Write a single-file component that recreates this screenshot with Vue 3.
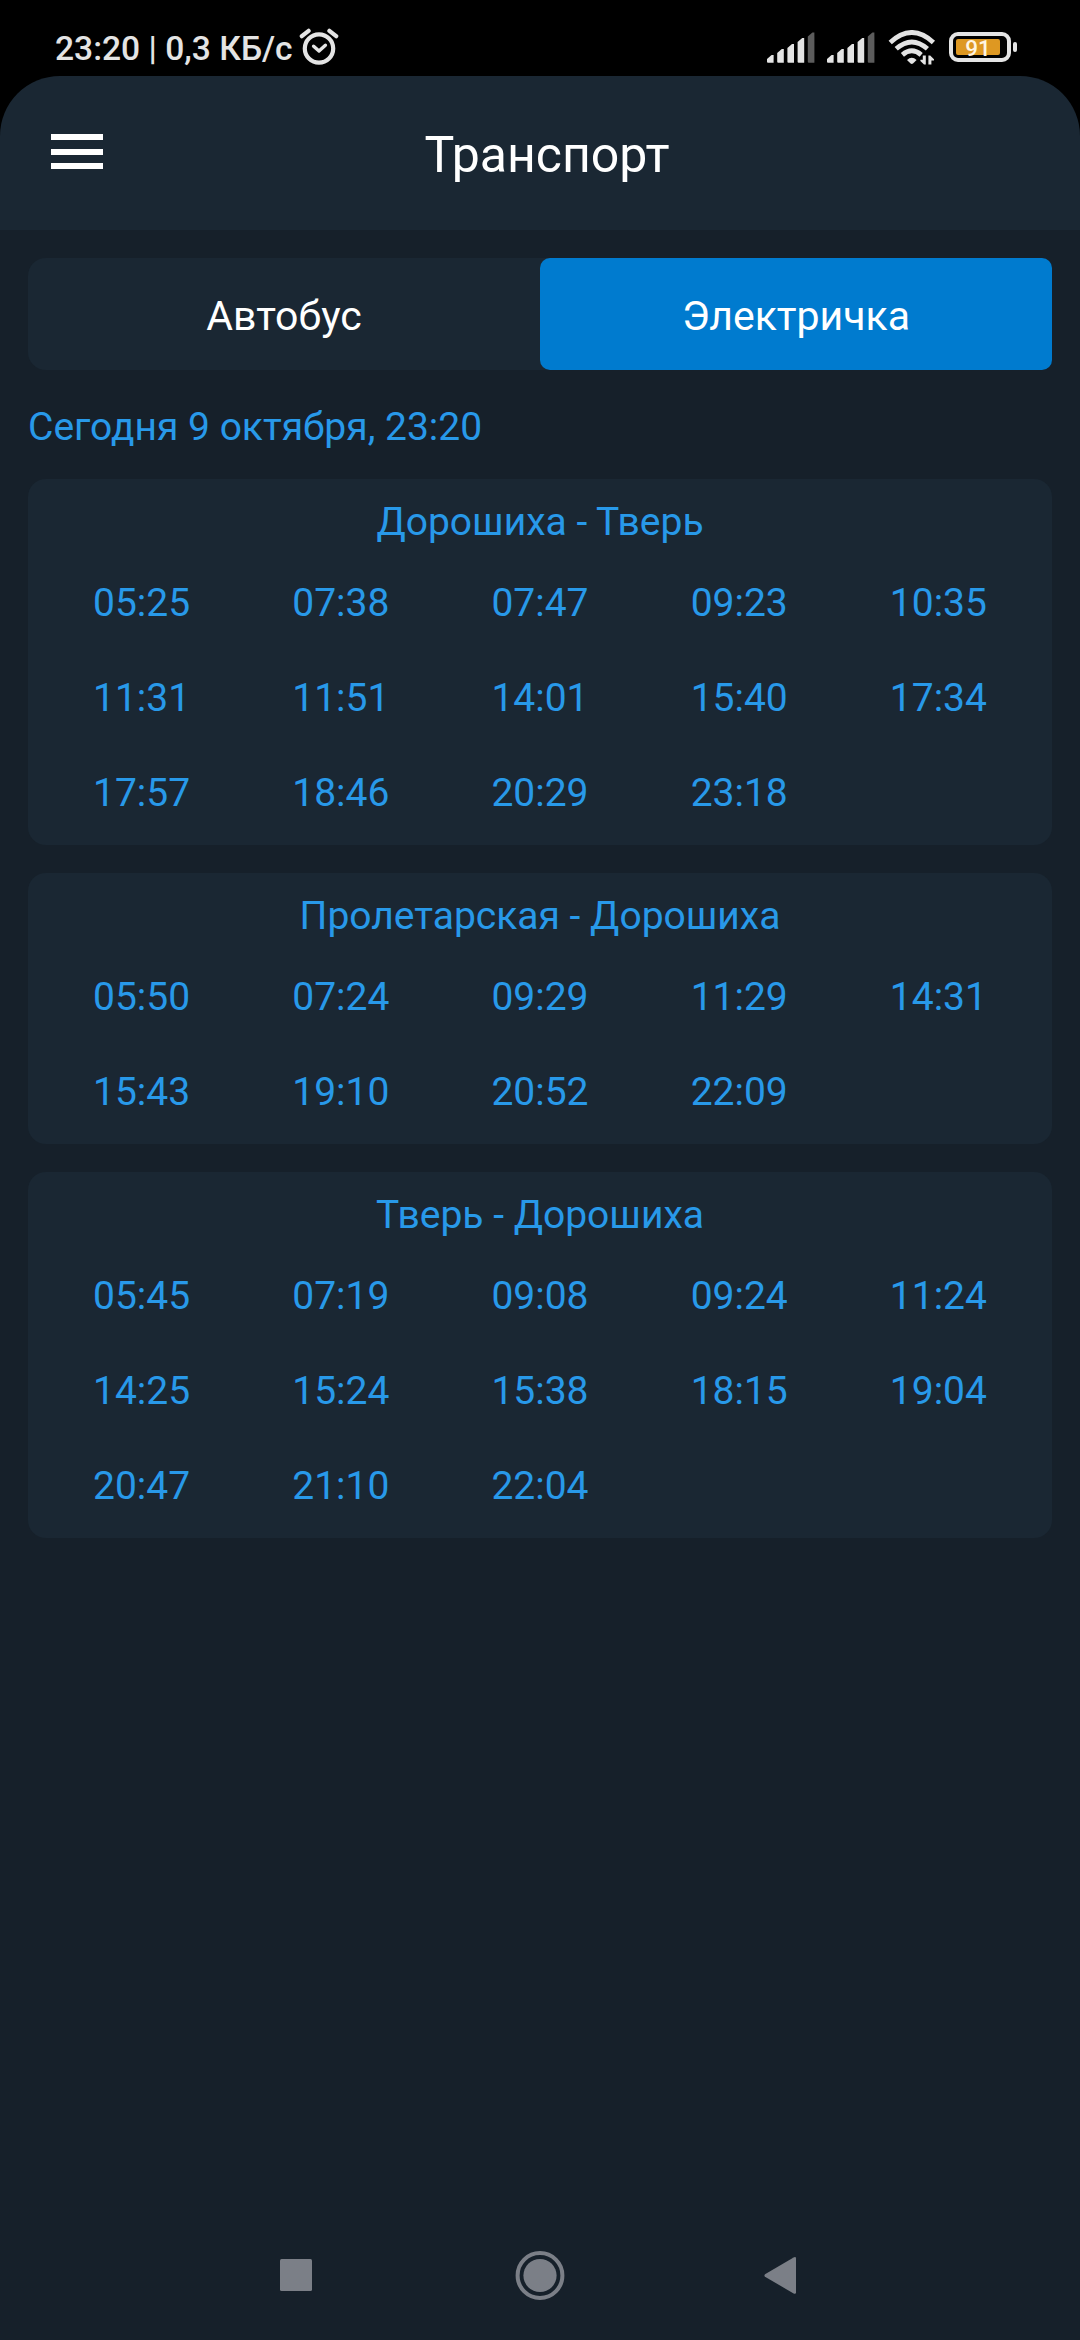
<template>
    <div class="screen">
        <div class="status-bar">
            <div class="status-left">
                <span class="status-text">23:20 | 0,3 КБ/с</span>
                <svg class="alarm" width="40" height="38" viewBox="0 0 40 38">
                    <circle cx="20" cy="20.5" r="14.2" />
                    <path d="M2.8 8.2L9.6 2.8M37.2 8.2L30.4 2.8" />
                    <path class="hands" d="M14.6 18.2L20 23L26.4 17.2" />
                </svg>
            </div>
            <div class="status-right">
                <svg
                    v-for="sim in 2"
                    :key="sim"
                    class="signal"
                    width="48"
                    height="32"
                    viewBox="0 0 48 32"
                >
                    <path
                        v-for="(bar, index) in signalBars"
                        :key="bar"
                        :d="bar"
                        :class="{ off: index === 4 }"
                    />
                </svg>
                <svg class="wifi" width="48" height="36" viewBox="0 0 48 36">
                    <path class="wave" d="M2.2 12.4Q23.8 -7.4 45.4 12.4" />
                    <path class="wave" d="M8.2 18.8Q23.8 5 39.4 18.8" />
                    <path class="wave" d="M14.4 24.8Q23.8 16.8 33.2 24.8" />
                    <path d="M19 30Q23.8 25.4 28.6 30L25 33.6Q23.8 34.4 22.6 33.6Z" />
                    <path
                        d="M37.8 25.5V34.6H36L32.4 31V29.8H34.8V25.5ZM40.4 34.6V25.5H42.2L46 29.2V30.4H43.4V34.6Z"
                    />
                </svg>
                <div class="battery">
                    <div class="battery-body">
                        <div class="battery-level">91</div>
                    </div>
                    <div class="battery-nub"></div>
                </div>
            </div>
        </div>

        <header class="header">
            <button class="menu" aria-label="Меню">
                <span></span>
                <span></span>
                <span></span>
            </button>
            <h1>Транспорт</h1>
        </header>

        <main class="content">
            <div class="tabs">
                <button
                    v-for="tab in tabs"
                    :key="tab"
                    class="tab"
                    :class="{ active: tab === activeTab }"
                    @click="activeTab = tab"
                >
                    {{ tab }}
                </button>
            </div>
            <p class="today">Сегодня 9 октября, 23:20</p>
            <section v-for="route in routes" :key="route.name" class="card">
                <h2>{{ route.name }}</h2>
                <div class="times">
                    <span v-for="time in route.times" :key="time">{{ time }}</span>
                </div>
            </section>
        </main>

        <nav class="nav-bar">
            <svg width="50" height="50" viewBox="0 0 50 50">
                <rect x="9" y="9" width="32" height="32" rx="1.5" />
            </svg>
            <svg width="50" height="50" viewBox="0 0 50 50">
                <circle class="ring" cx="25" cy="25.5" r="22.4" />
                <circle cx="25" cy="25.5" r="16.6" />
            </svg>
            <svg width="50" height="50" viewBox="0 0 50 50">
                <path
                    d="M6 24.2L34.6 7.4Q37 6.4 37 8.4V42.2Q37 44.6 34.6 43.4L6 26.8Q4.8 25.5 6 24.2Z"
                />
            </svg>
        </nav>
    </div>
</template>

<script setup>
import { ref } from 'vue'

const tabs = ['Автобус', 'Электричка']
const activeTab = ref('Электричка')

const routes = [
    {
        name: 'Дорошиха - Тверь',
        times: [
            '05:25', '07:38', '07:47', '09:23', '10:35',
            '11:31', '11:51', '14:01', '15:40', '17:34',
            '17:57', '18:46', '20:29', '23:18'
        ]
    },
    {
        name: 'Пролетарская - Дорошиха',
        times: [
            '05:50', '07:24', '09:29', '11:29', '14:31',
            '15:43', '19:10', '20:52', '22:09'
        ]
    },
    {
        name: 'Тверь - Дорошиха',
        times: [
            '05:45', '07:19', '09:08', '09:24', '11:24',
            '14:25', '15:24', '15:38', '18:15', '19:04',
            '20:47', '21:10', '22:04'
        ]
    }
]

// Столбики уровня сети, последний неактивен
const signalBars = [23, 17, 12, 6, 0.5].map((top, index) => {
    const x = index * 10.2
    return `M${x} ${top + 4}L${x + 4.6} ${top}H${x + 6.6}V30.8H${x + 1}Q${x} 30.8 ${x} 29.8Z`
})
</script>

<style>
body {
    margin: 0;
    background: #16202a;
}
</style>

<style scoped>
.screen {
    display: flex;
    flex-direction: column;
    width: 1080px;
    height: 2340px;
    overflow: hidden;
    background: #16202a;
    font-family: Roboto, 'Noto Sans', sans-serif;
}

button {
    border: 0;
    padding: 0;
    background: none;
    font-family: inherit;
}

.status-bar {
    display: flex;
    justify-content: space-between;
    flex: none;
    box-sizing: border-box;
    height: 76px;
    padding: 0 63px 0 55px;
    background: #000;
    color: #e4e4e4;
}

.status-left {
    display: flex;
    align-items: flex-start;
}

.status-text {
    padding-top: 29px;
    font-size: 33.6px;
    line-height: 40px;
    font-weight: 500;
    white-space: nowrap;
}

.alarm {
    margin: 28px 0 0 6px;
    fill: none;
    stroke: #e4e4e4;
    stroke-width: 4.2;
    stroke-linecap: round;
}

.alarm .hands {
    stroke-width: 3.4;
    stroke-linejoin: round;
}

.status-right {
    display: flex;
    align-items: flex-start;
    fill: #e4e4e4;
}

.signal {
    margin: 32px 12px 0 0;
}

.signal .off {
    fill: #5c5c5c;
}

.wifi {
    margin: 30px 13px 0 1px;
}

.wave {
    fill: none;
    stroke: #e4e4e4;
    stroke-width: 4.8;
}

.battery {
    display: flex;
    align-items: center;
    gap: 2px;
    margin-top: 32px;
}

.battery-body {
    box-sizing: border-box;
    width: 62px;
    height: 30px;
    padding: 3px;
    border: 4px solid #e4e4e4;
    border-radius: 9px;
}

.battery-level {
    width: 44px;
    height: 16px;
    border-radius: 2px;
    background: #de9822;
    color: #fff5e2;
    font-size: 22.5px;
    line-height: 18px;
    font-weight: 500;
    text-align: center;
}

.battery-nub {
    width: 4px;
    height: 10px;
    border-radius: 2px;
    background: #e4e4e4;
}

.header {
    display: grid;
    grid-template-columns: 52px 1fr 38px;
    align-items: start;
    flex: none;
    box-sizing: border-box;
    height: 154px;
    padding: 0 51px;
    border-radius: 60px 60px 0 0;
    background: #1a2733;
    box-shadow: 0 -60px 0 60px #000;
    clip-path: inset(0);
}

.menu {
    display: flex;
    flex-direction: column;
    gap: 8.5px;
    margin-top: 58px;
}

.menu span {
    width: 52px;
    height: 6px;
    background: #fff;
}

h1 {
    margin: 49px 0 0;
    color: #fff;
    font-size: 50px;
    line-height: 60px;
    font-weight: 400;
    text-align: center;
}

.content {
    flex: 1;
    padding: 28px 28px 0;
}

.tabs {
    display: flex;
    height: 112px;
    border-radius: 18px;
    background: #1a2733;
}

.tab {
    flex: 1;
    padding-top: 4px;
    border-radius: 10px;
    color: #fff;
    font-size: 41px;
}

.tab.active {
    background: #007bcf;
}

.today {
    margin: 34px 0 28px;
    color: #2899e9;
    font-size: 39px;
    line-height: 47px;
}

.card {
    box-sizing: border-box;
    margin-bottom: 28px;
    padding: 0 14px;
    border-radius: 18px;
    background: #1a2733;
    color: #2899e9;
    font-size: 39px;
}

h2 {
    box-sizing: border-box;
    height: 81px;
    margin: 0;
    padding-top: 20px;
    font-size: 39px;
    line-height: 47px;
    font-weight: 400;
    text-align: center;
}

.times {
    display: grid;
    grid-template-columns: repeat(5, 1fr);
    grid-auto-rows: 95px;
    line-height: 47px;
    text-align: center;
}

.times span {
    padding-top: 20px;
}

.nav-bar {
    display: grid;
    grid-template-columns: repeat(3, 244px);
    justify-content: center;
    align-items: center;
    justify-items: center;
    flex: none;
    height: 130px;
    fill: #7b7f87;
}

.ring {
    fill: none;
    stroke: #7b7f87;
    stroke-width: 4;
}
</style>
